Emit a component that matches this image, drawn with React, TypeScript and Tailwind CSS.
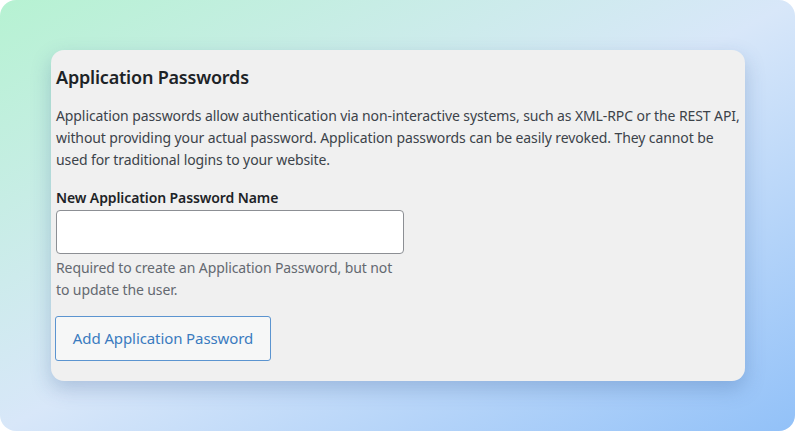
import React from "react";

export default function App() {
  return (
    <div className="w-[795px] h-[431px] bg-white">
      <div
        className="w-[795px] h-[431px] rounded-[16px] bg-gradient-to-br from-[#b6f2d2] via-[#d8e7f9] to-[#92c1f8] pt-[50px] pl-[51px]"
        style={{ fontFamily: '"Segoe UI", "Noto Sans", sans-serif' }}
      >
        <div className="w-[694px] h-[331px] rounded-[13px] bg-[#f0f0f0] shadow-[0_8px_20px_rgba(40,80,140,0.25)] pl-[5px] pr-[4px] pt-[15px]">
          <h2 className="text-[18px] leading-[24px] font-semibold text-[#1d2327] tracking-[-0.2px]">Application Passwords</h2>
          <p className="mt-[16px] text-[14px] leading-[22px] text-[#3c434a] whitespace-nowrap tracking-[-0.1px]">
            Application passwords allow authentication via non-interactive systems, such as XML-RPC or the REST API,
            <br />
            without providing your actual password. Application passwords can be easily revoked. They cannot be
            <br />
            used for traditional logins to your website.
          </p>
          <div className="mt-[16px] text-[14px] leading-[22px] font-semibold text-[#1d2327] tracking-[-0.1px]">New Application Password Name</div>
          <input
            type="text"
            className="mt-[1px] block w-[348px] h-[44px] rounded-[4px] border border-[#8c8f94] bg-white outline-none"
          />
          <p className="mt-[3px] text-[14px] leading-[22px] text-[#646970] tracking-[-0.1px]">
            Required to create an Application Password, but not
            <br />
            to update the user.
          </p>
          <button className="mt-[15px] -ml-[1px] w-[216px] h-[45px] rounded-[3px] border border-[#5b94d0] bg-[#f6f7f7] text-[15px] text-[#3a7bbf] tracking-[-0.1px]">
            Add Application Password
          </button>
        </div>
      </div>
    </div>
  );
}
